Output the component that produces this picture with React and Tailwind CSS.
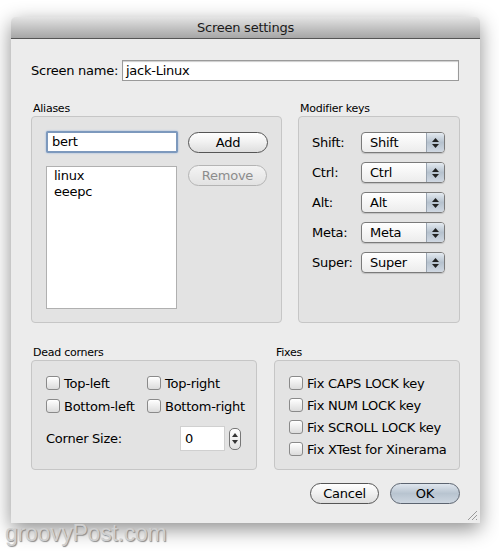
import React from 'react';

const font = { fontFamily: '"DejaVu Sans", "Noto Sans", sans-serif', letterSpacing: '-0.25px' };

function Checkbox({ label }) {
  return (
    <label className="flex items-center gap-[4px] text-[13px] text-black leading-none">
      <span className="w-[14px] h-[14px] rounded-[3px] border border-[#8a8a8a] bg-gradient-to-b from-white to-[#dcdcdc] shadow-[inset_0_1px_1px_rgba(255,255,255,0.8)]" />
      <span>{label}</span>
    </label>
  );
}

function AquaButton({ children, width, disabled, primary }) {
  let cls = 'h-[21px] rounded-full border flex items-center justify-center text-[13px] leading-none ';
  if (disabled) {
    cls += 'border-[#b4b4b4] bg-gradient-to-b from-[#f4f4f4] to-[#e2e2e2] text-[#8c8c8c]';
  } else if (primary) {
    cls += 'border-[#5c6470] bg-gradient-to-b from-[#dfe6ee] via-[#b8c4d0] to-[#cdd6e0] text-black';
  } else {
    cls += 'border-[#555] bg-gradient-to-b from-white via-[#f0f0f0] to-[#dedede] text-black';
  }
  return (
    <button className={cls} style={{ width }}>
      {children}
    </button>
  );
}

function Popup({ value }) {
  return (
    <div className="flex h-[21px] w-[84px] rounded-[4px] border border-[#7a7a7a] bg-gradient-to-b from-white to-[#ececec] overflow-hidden shadow-[0_1px_1px_rgba(0,0,0,0.15)]">
      <div className="flex-1 flex items-center pl-[8px] text-[13px] leading-none">{value}</div>
      <div className="w-[18px] border-l border-[#9aa4b0] bg-gradient-to-b from-[#e4eaf0] via-[#b6c2ce] to-[#d0d8e2] flex flex-col items-center justify-center gap-[2px]">
        <svg width="7" height="4" viewBox="0 0 7 4"><path d="M3.5 0 L7 4 L0 4 Z" fill="#222" /></svg>
        <svg width="7" height="4" viewBox="0 0 7 4"><path d="M0 0 L7 0 L3.5 4 Z" fill="#222" /></svg>
      </div>
    </div>
  );
}

function GroupLabel({ children }) {
  return <div className="text-[11px] leading-none text-black pl-[2px] mb-[2px]">{children}</div>;
}

export default function App() {
  const mods = ['Shift', 'Ctrl', 'Alt', 'Meta', 'Super'];
  return (
    <div className="w-[499px] h-[553px] bg-white overflow-hidden relative" style={font}>
      <div className="ml-[11px] mt-[17px] w-[469px] h-[506px] bg-[#ececec] flex flex-col shadow-[0_6px_20px_rgba(0,0,0,0.45)] rounded-t-[5px] relative">
        <div className="h-[22px] rounded-t-[5px] bg-gradient-to-b from-[#e4e4e4] via-[#c4c4c4] to-[#a6a6a6] border-b border-[#555] flex items-center justify-center text-[13px] text-[#1a1a1a]">
          Screen settings
        </div>

        <div className="flex items-center mt-[21px] pl-[20px] pr-[21px] h-[21px]">
          <span className="text-[13px] w-[91px]">Screen name:</span>
          <div className="flex-1 h-[21px] bg-white border border-[#9a9a9a] flex items-center pl-[3px] text-[13px] shadow-[inset_0_1px_1px_rgba(0,0,0,0.2)]">
            jack-Linux
          </div>
        </div>

        <div className="flex mt-[22px] pl-[20px] gap-[16px]">
          <div className="w-[251px]">
            <GroupLabel>Aliases</GroupLabel>
            <div className="h-[207px] rounded-[4px] border border-[#c6c6c6] bg-[#e3e3e3] pt-[14px] pl-[14px] flex gap-[10px]">
              <div className="flex flex-col">
                <div className="w-[132px] h-[22px] bg-white border-2 border-[#7d99bd] rounded-[2px] flex items-center pl-[4px] text-[13px] shadow-[0_0_2px_#8fb0dc]">
                  bert
                </div>
                <div className="mt-[13px] w-[131px] h-[143px] bg-white border border-[#b0b0b0] pl-[7px] pt-[1px] text-[13px] leading-[16px]">
                  <div>linux</div>
                  <div>eeepc</div>
                </div>
              </div>
              <div className="flex flex-col gap-[12px] pt-[1px]">
                <AquaButton width={80}>Add</AquaButton>
                <AquaButton width={79} disabled>Remove</AquaButton>
              </div>
            </div>
          </div>

          <div className="w-[162px]">
            <GroupLabel>Modifier keys</GroupLabel>
            <div className="h-[207px] rounded-[4px] border border-[#c6c6c6] bg-[#e3e3e3] pt-[15px] pl-[13px] flex flex-col gap-[9px]">
              {mods.map((m) => (
                <div key={m} className="flex items-center">
                  <span className="w-[49px] text-[13px]">{m}:</span>
                  <Popup value={m} />
                </div>
              ))}
            </div>
          </div>
        </div>

        <div className="flex mt-[24px] pl-[20px] gap-[17px]">
          <div className="w-[226px]">
            <GroupLabel>Dead corners</GroupLabel>
            <div className="h-[110px] rounded-[4px] border border-[#c6c6c6] bg-[#e3e3e3] pt-[15px] pl-[14px]">
              <div className="grid grid-cols-[101px_1fr] gap-y-[9px]">
                <Checkbox label="Top-left" />
                <Checkbox label="Top-right" />
                <Checkbox label="Bottom-left" />
                <Checkbox label="Bottom-right" />
              </div>
              <div className="flex items-center mt-[13px]">
                <span className="w-[134px] text-[13px]">Corner Size:</span>
                <div className="w-[45px] h-[25px] bg-white border border-[#d0d0d0] flex items-center pl-[4px] text-[13px]">0</div>
                <div className="ml-[4px] w-[12px] h-[22px] rounded-[5px] border border-[#777] bg-gradient-to-b from-white to-[#e0e0e0] flex flex-col items-center justify-center gap-[3px]">
                  <svg width="6" height="4" viewBox="0 0 6 4"><path d="M3 0 L6 4 L0 4 Z" fill="#333" /></svg>
                  <svg width="6" height="4" viewBox="0 0 6 4"><path d="M0 0 L6 0 L3 4 Z" fill="#333" /></svg>
                </div>
              </div>
            </div>
          </div>

          <div className="w-[186px]">
            <GroupLabel>Fixes</GroupLabel>
            <div className="h-[110px] rounded-[4px] border border-[#c6c6c6] bg-[#e3e3e3] pt-[15px] pl-[14px] flex flex-col gap-[8px]">
              <Checkbox label="Fix CAPS LOCK key" />
              <Checkbox label="Fix NUM LOCK key" />
              <Checkbox label="Fix SCROLL LOCK key" />
              <Checkbox label="Fix XTest for Xinerama" />
            </div>
          </div>
        </div>

        <div className="flex justify-end gap-[11px] pr-[20px] mt-[13px]">
          <AquaButton width={69}>Cancel</AquaButton>
          <AquaButton width={70} primary>OK</AquaButton>
        </div>

        <svg className="absolute right-[2px] bottom-[2px]" width="11" height="11" viewBox="0 0 11 11">
          <path d="M10 1 L1 10 M10 5 L5 10 M10 9 L9 10" stroke="#999" strokeWidth="1" />
        </svg>
      </div>

      <div
        className="absolute left-[5px] top-[522px] text-[23px] text-[#cfcfcf] leading-none"
        style={{ fontFamily: '"Liberation Sans", Arial, sans-serif', textShadow: '1px 1px 1px #8a8a8a' }}
      >
        groovyPost.com
      </div>
    </div>
  );
}
